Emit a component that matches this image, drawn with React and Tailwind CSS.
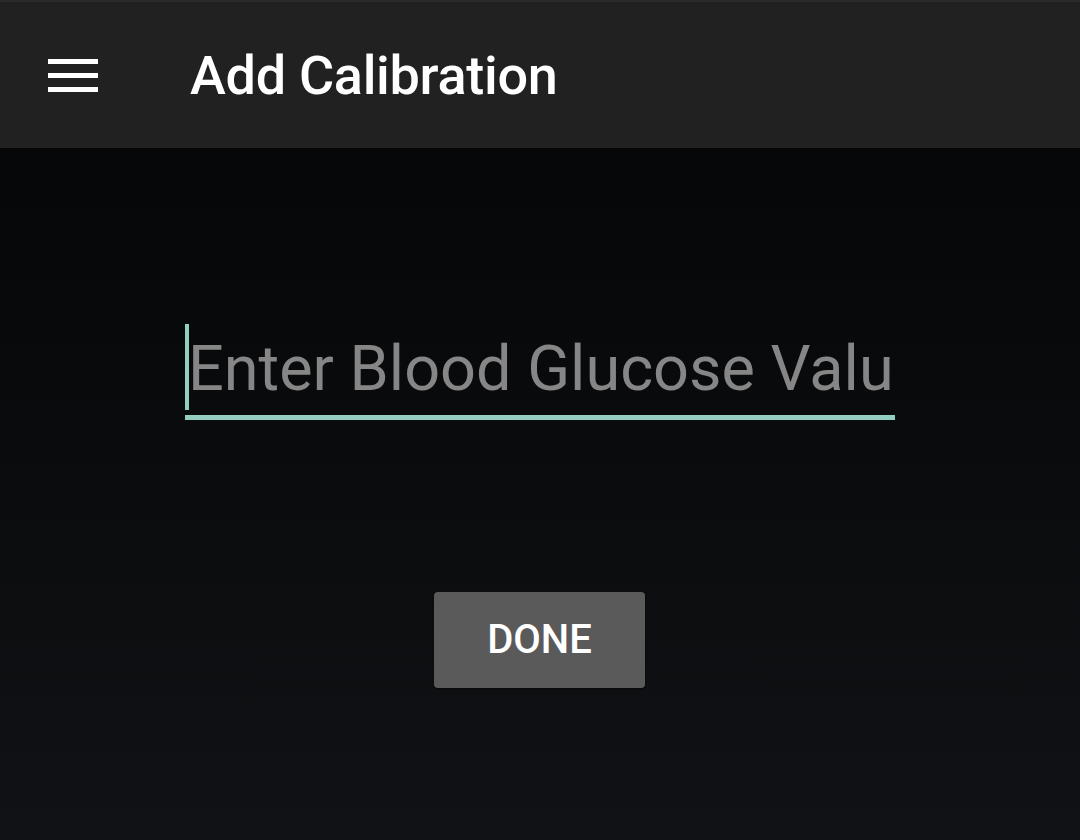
import React from 'react';

export default function App() {
  return (
    <div className="w-[1080px] h-[840px] flex flex-col bg-gradient-to-b from-[#040506] to-[#111215] font-['Roboto',sans-serif] overflow-hidden">
      {/* toolbar */}
      <div className="h-[148px] bg-[#212121] border-t-2 border-[#2b2b2b] flex items-center shrink-0">
        <div className="w-[50px] ml-[48px] flex flex-col gap-[9px]">
          <div className="h-[5px] bg-white" />
          <div className="h-[5px] bg-white" />
          <div className="h-[5px] bg-white" />
        </div>
        <h1 className="ml-[92px] mt-[2px] text-white text-[54px] font-medium leading-none tracking-[-0.3px]">
          Add Calibration
        </h1>
      </div>

      {/* form */}
      <div className="flex flex-col items-center">
        <div className="mt-[176px] w-[710px] relative">
          <div className="flex items-end h-[91px]">
            <div className="w-[4px] h-[86px] bg-[#93cfc1] shrink-0 self-start" />
            <div className="w-[702px] overflow-hidden">
              <span className="block text-[#868686] text-[63px] leading-none whitespace-nowrap pb-[15px] -ml-[1px]">
                Enter Blood Glucose Value
              </span>
            </div>
          </div>
          <div className="h-[5px] bg-[#93cfc1]" />
        </div>

        <button className="mt-[172px] -ml-[1px] w-[211px] h-[96px] bg-[#5a5a5a] rounded-[4px] text-white text-[40px] font-medium flex items-center justify-center shadow-[0_1px_2px_rgba(0,0,0,0.6)]">
          DONE
        </button>
      </div>
    </div>
  );
}
